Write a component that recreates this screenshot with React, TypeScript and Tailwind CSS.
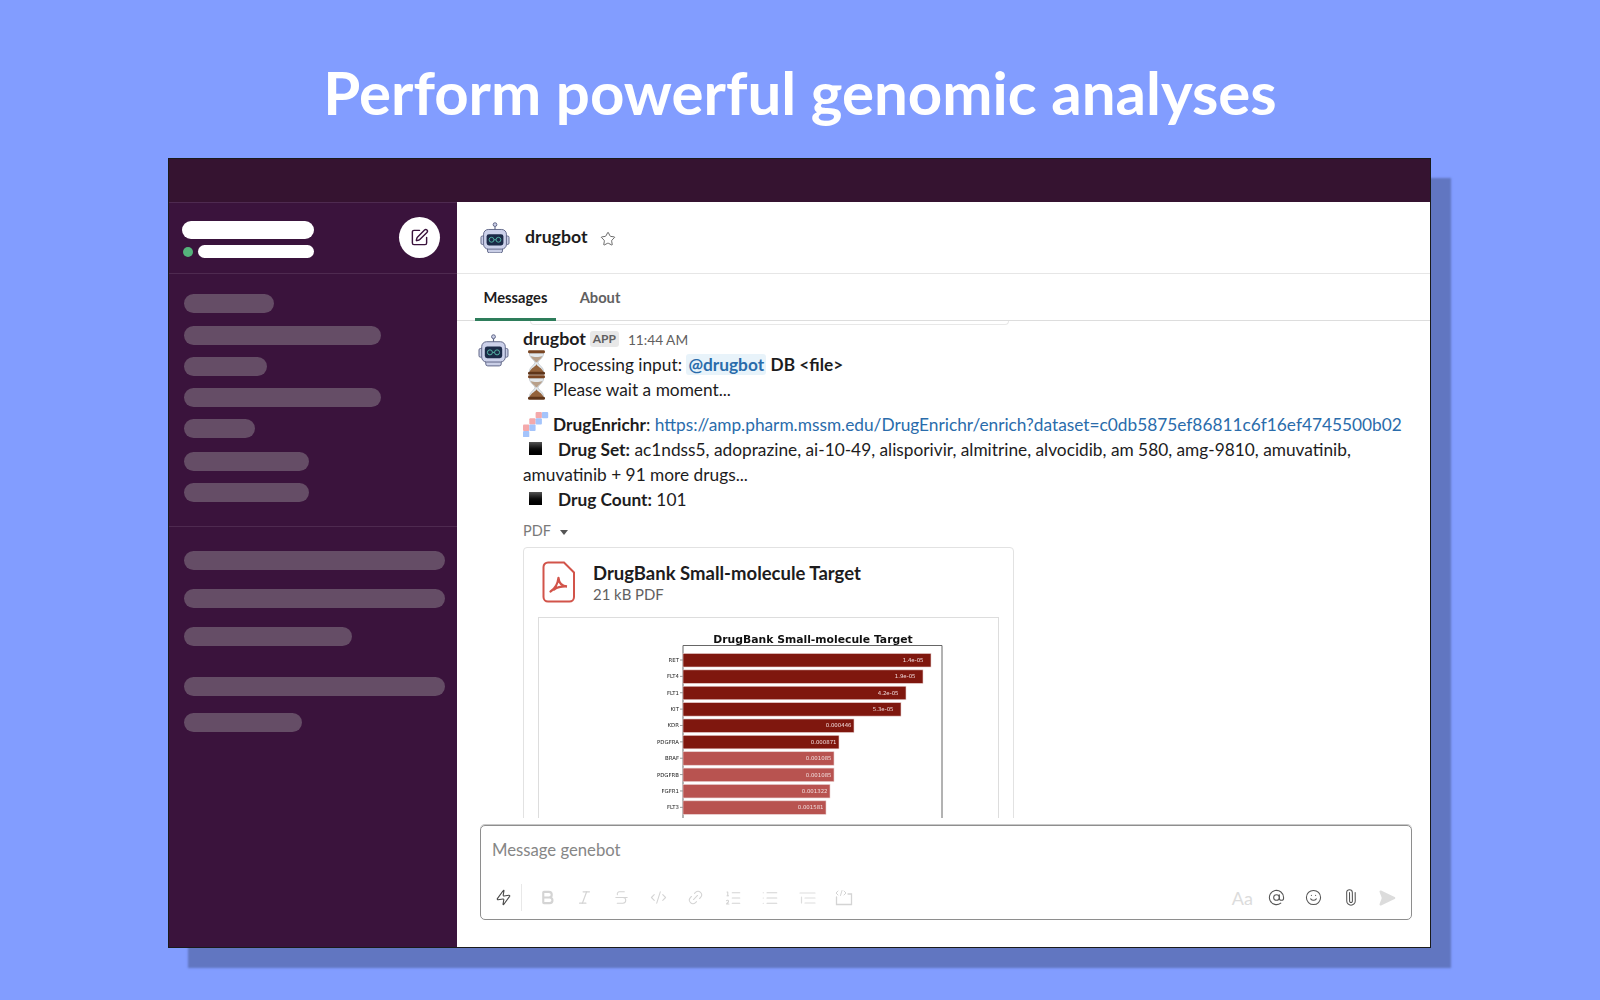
import { AtSign, Bold, CodeXml, Italic, Link2, List, ListOrdered, Paperclip, SendHorizontal, Smile, SquarePen, Star, Strikethrough, Zap } from "lucide-react";

function Robot({ size = 32 }: { size?: number }) {
  return (
    <svg width={size} height={size * 1.06} viewBox="0 0 32 34" className="shrink-0">
      <circle cx="16" cy="2.800" r="2" fill="#c9cee6" stroke="#5d6485" strokeWidth="1" />
      <path d="M16 5v4" stroke="#5d6485" strokeWidth="1.200" />
      <rect x="1" y="15" width="4" height="9" rx="1.500" fill="#c9cee6" stroke="#5d6485" />
      <rect x="27" y="15" width="4" height="9" rx="1.500" fill="#c9cee6" stroke="#5d6485" />
      <rect x="8" y="26" width="16" height="7" rx="2" fill="#c9cee6" stroke="#5d6485" />
      <rect x="3.800" y="8" width="24.400" height="21" rx="5" fill="#ccd1ea" stroke="#5d6485" />
      <rect x="7" y="13" width="18" height="12" rx="2.500" fill="#1b2a47" />
      <circle cx="12.300" cy="19" r="2.600" fill="none" stroke="#57b7a8" strokeWidth="1" />
      <circle cx="19.700" cy="19" r="2.600" fill="none" stroke="#57b7a8" strokeWidth="1" />
      <path d="M15 19h2" stroke="#57b7a8" strokeWidth="1" />
    </svg>
  );
}

function Hourglass() {
  return (
    <svg width="19" height="25" viewBox="0 0 19 25" className="block">
      <path d="M2.500 3C2 7.500 7 9.500 8 12.500 7 15.500 2 17.500 2.500 22h14c.5-4.500-4.500-6.500-5.500-9.500 1-3 6-5 5.500-9.500z" fill="#e3e8ec" stroke="#aab2b8" strokeWidth="0.600" />
      <path d="M3.800 6c3 1.400 8.400 1.400 11.400 0-.6 3-4 4-5 6.300H8.800C7.800 10 4.400 9 3.800 6z" fill="#b8a08a" />
      <path d="M9.500 14c.3 2.500 6 4 6.800 8H2.700c.8-4 6.500-5.500 6.800-8z" fill="#94633c" />
      <rect x="1" y="0.300" width="17" height="3" rx="1.400" fill="#7a4522" />
      <rect x="1" y="21.800" width="17" height="3" rx="1.400" fill="#5f3519" />
    </svg>
  );
}

function EnrichrLogo() {
  const pink = "#f4a9ab";
  const blue = "#a4c4fb";
  const s = 6.300;
  const cells: [number, number, string][] = [
    [2, 0, pink], [3, 0, blue], [1, 1, pink], [2, 1, blue], [0, 2, pink], [1, 2, blue], [0, 3, blue],
  ];
  return (
    <svg width="26" height="25" viewBox="0 0 26 25" className="shrink-0">
      {cells.map(([c, r, f], i) => (
        <rect key={i} x={c * s} y={r * s} width={s} height={s} fill={f} rx="1" />
      ))}
    </svg>
  );
}

function Blk() {
  return <span className="inline-block w-[13px] h-[13px] ml-[6px] mr-[16px] bg-gradient-to-b from-[#555555] via-[#111111] to-[#000000] align-[1px]" />;
}

function PdfIcon() {
  return (
    <svg width="34" height="42" viewBox="0 0 34 42" fill="none" className="shrink-0">
      <path d="M6 1.500h16l10 10V36a4.500 4.500 0 0 1-4.500 4.500H6A4.500 4.500 0 0 1 1.500 36V6A4.500 4.500 0 0 1 6 1.500z" stroke="#d2544a" strokeWidth="2" />
      <path d="M16.500 17c-.6 5-3.500 11-8 13.500M16.500 17c.4 5 3.500 8 8.500 8.500-5-.3-10 1-13 3" stroke="#d2544a" strokeWidth="2.300" strokeLinecap="round" />
    </svg>
  );
}

const bars = [
  ["RET", 931, "1.4e-05", 1], ["FLT4", 923, "1.9e-05", 1], ["FLT1", 906, "4.2e-05", 1], ["KIT", 901, "5.3e-05", 1],
  ["KDR", 854, "0.000446", 1], ["PDGFRA", 839, "0.000871", 1], ["BRAF", 834, "0.001085", 0], ["PDGFRB", 834, "0.001085", 0],
  ["FGFR1", 830, "0.001322", 0], ["FLT3", 826, "0.001581", 0],
] as const;

function Chart() {
  const left = 144;
  return (
    <svg width="459" height="200" viewBox="0 0 459 200" className="block blur-[0.3px]">
      <text x="274" y="25" textAnchor="middle" fontFamily="DejaVu Sans" fontWeight="700" fontSize="10.800" fill="#111">DrugBank Small-molecule Target</text>
      <path d="M144 200V27.500H403V200" stroke="#666" strokeWidth="1" fill="none" />
      {bars.map(([name, end, val, dark], i) => {
        const y = 35.500 + i * 16.37;
        const w = end - 539 - left;
        return (
          <g key={name}>
            <path d={`M141 ${y + 6.500}h3`} stroke="#555" strokeWidth="0.600" />
            <text x="140" y={y + 8.500} textAnchor="end" fontFamily="DejaVu Sans" fontSize="5.400" fill="#222">{name}</text>
            <rect x={left} y={y} width={w} height="13.500" fill={dark ? "#7f170e" : "#b85350"} stroke="#e8cfcf" strokeWidth="0.600" />
            <text x={left + w - (i < 4 ? 7.500 : 2.500)} y={y + 8.500} textAnchor="end" fontFamily="DejaVu Sans" fontSize="5.400" fill="#f0dcdc">{val}</text>
          </g>
        );
      })}
    </svg>
  );
}

function Pill({ w, mt }: { w: string; mt: string }) {
  return <div className={`h-[19px] rounded-full bg-[#654d66] ${w} ${mt}`} />;
}

function CodeBlockIcon() {
  return (
    <svg width="18" height="16" viewBox="0 0 18 16" fill="none" stroke="#d4d4d4" strokeWidth="1.300" strokeLinecap="round">
      <path d="M1.500 7v7.500h15V4H13" />
      <path d="M3 1L1 3l2 2M7 0.500L5.500 5.500M9 1l2 2-2 2" strokeWidth="1" />
    </svg>
  );
}

function IndentIcon() {
  return (
    <svg width="17" height="14" viewBox="0 0 17 14" fill="none" stroke="#dddddd" strokeWidth="1.200" strokeLinecap="round">
      <path d="M1 2h15M6 7h10M6 12h10M2.500 6v6" />
    </svg>
  );
}

export default function App() {
  const tool = "text-[#d4d4d4] shrink-0";
  return (
    <div className="w-[1600px] h-[1000px] bg-[#829dff] overflow-hidden font-['Lato',sans-serif]">
      <h1 className="h-[158px] pt-[55px] text-center text-[60px] leading-[74px] font-bold text-white">Perform powerful genomic analyses</h1>
      <div className="ml-[168px] w-[1263px] h-[790px] flex flex-col border border-[#1a1a1a] shadow-[20px_20px_2px_#6176c1]">
        <div className="h-[43px] shrink-0 bg-[#351330]" />
        <div className="flex-1 flex min-h-0">
          <aside className="w-[288px] shrink-0 bg-[#3a133c] border-t border-[#4e2a50]">
            <div className="h-[71px] flex items-center justify-between pl-[13px] pr-[17px] border-b border-[#4e2a50]">
              <div className="flex flex-col gap-[6px] pt-[3px]">
                <div className="w-[132px] h-[18px] rounded-full bg-white" />
                <div className="flex items-center gap-[5px]">
                  <div className="w-[10px] h-[10px] rounded-full bg-[#55b27b] ml-[1px]" />
                  <div className="w-[116px] h-[13px] rounded-full bg-white" />
                </div>
              </div>
              <div className="w-[41px] h-[41px] rounded-full bg-white flex items-center justify-center mb-[1px]">
                <SquarePen size={19} color="#3a133c" strokeWidth={1.800} />
              </div>
            </div>
            <div className="px-[15px] pt-[20px] pb-[24px] border-b border-[#4e2a50]">
              <Pill w="w-[90px]" mt="" />
              <Pill w="w-[197px]" mt="mt-[13px]" />
              <Pill w="w-[83px]" mt="mt-[12px]" />
              <Pill w="w-[197px]" mt="mt-[12px]" />
              <Pill w="w-[71px]" mt="mt-[12px]" />
              <Pill w="w-[125px]" mt="mt-[14px]" />
              <Pill w="w-[125px]" mt="mt-[12px]" />
            </div>
            <div className="px-[15px] pt-[24px]">
              <Pill w="w-[261px]" mt="" />
              <Pill w="w-[261px]" mt="mt-[19px]" />
              <Pill w="w-[168px]" mt="mt-[19px]" />
              <Pill w="w-[261px]" mt="mt-[31px]" />
              <Pill w="w-[118px]" mt="mt-[17px]" />
            </div>
          </aside>
          <main className="flex-1 min-w-0 bg-white flex flex-col text-[#1d1c1d]">
            <div className="h-[72px] shrink-0 flex items-center pl-[23px] border-b border-[#e6e6e6]">
              <Robot size={30} />
              <span className="ml-[15px] text-[17.700px] font-bold leading-none mb-[1px]">drugbot</span>
              <Star size={16} strokeWidth={1.300} color="#555555" className="ml-[12px] mt-[2px]" />
            </div>
            <div className="h-[47px] shrink-0 flex items-stretch pl-[18px] border-b border-[#dddddd] text-[14.700px] leading-none">
              <div className="w-[81px] flex items-center justify-center font-bold border-b-[3px] border-[#2e7d5b] pt-[3px] h-[47px]">Messages</div>
              <div className="ml-[16px] w-[56px] flex items-center justify-center font-bold text-[#616061] pt-[1px]">About</div>
            </div>
            <div className="flex-1 min-h-0 overflow-hidden relative flex">
              <div className="absolute left-[73px] top-0 w-[479px] h-[4px] border border-t-0 border-[#e8e8e8] rounded-b-[4px]" />
              <div className="pl-[21px] pt-[13px] w-[66px] shrink-0">
                <Robot size={31} />
              </div>
              <div className="pt-[6px] flex-1 min-w-0 pr-[20px] text-[17.300px] leading-[25px]">
                <div className="h-[25px] flex items-center leading-none pb-[2px]">
                  <span className="text-[17.800px] font-bold">drugbot</span>
                  <span className="ml-[4px] h-[16px] w-[29px] rounded-[3px] bg-[#e8e8e8] text-[12px] text-[#616061] flex items-center justify-center font-bold">APP</span>
                  <span className="ml-[9px] text-[13.700px] text-[#616061] mt-[2px]">11:44 AM</span>
                </div>
                <div className="flex">
                  <div className="w-[30px] pl-[4px] shrink-0 -mt-[2px]">
                    <Hourglass />
                    <Hourglass />
                  </div>
                  <div>
                    <div>
                      Processing input: <span className="px-[2px] rounded-[3px] bg-[#e8f3fa] text-[#2a6cab] font-bold">@drugbot</span> <span className="font-bold">DB &lt;file&gt;</span>
                    </div>
                    <div>Please wait a moment...</div>
                  </div>
                </div>
                <div className="flex mt-[10px] items-center">
                  <div className="w-[30px] shrink-0 -mt-[1px]"><EnrichrLogo /></div>
                  <div className="whitespace-nowrap"><span className="font-bold">DrugEnrichr</span>: <span className="text-[#2a6cab]">https://amp.pharm.mssm.edu/DrugEnrichr/enrich?dataset=c0db5875ef86811c6f16ef4745500b02</span></div>
                </div>
                <div><Blk /><span className="font-bold">Drug Set:</span> ac1ndss5, adoprazine, ai-10-49, alisporivir, almitrine, alvocidib, am 580, amg-9810, amuvatinib, amuvatinib + 91 more drugs...</div>
                <div><Blk /><span className="font-bold">Drug Count:</span> 101</div>
                <div className="mt-[9px] h-[20px] flex items-center text-[14.500px] leading-none text-[#7a7a7a]">
                  PDF
                  <span className="ml-[9px] mt-[2px] w-0 h-0 border-x-[4.500px] border-x-transparent border-t-[5px] border-t-[#555555]" />
                </div>
                <div className="mt-[6px] w-[491px] h-[400px] rounded-[4px] border border-[#e2e2e2] px-[14px]">
                  <div className="h-[69px] flex items-center pl-[4px] pb-[2px]">
                    <PdfIcon />
                    <div className="ml-[17px]">
                      <div className="text-[18.500px] leading-[24px] font-bold">DrugBank Small-molecule Target</div>
                      <div className="text-[14.900px] leading-[18px] text-[#616061]">21 kB PDF</div>
                    </div>
                  </div>
                  <div className="h-[300px] border border-[#dddddd]">
                    <Chart />
                  </div>
                </div>
              </div>
            </div>
            <div className="h-[129px] shrink-0 pl-[23px] pr-[18px] pt-[7px] bg-white relative">
              <div className="h-[95px] rounded-[5px] border border-[#8e8e8e] flex flex-col shadow-[0_-1px_0_#c8c8c8]">
                <div className="h-[47px] pl-[11px] pt-[3px] flex items-center text-[16.700px] text-[#868686]">Message genebot</div>
                <div className="flex-1 flex items-center pl-[14px] pr-[15px] pt-[3px]">
                  <Zap size={17} strokeWidth={1.600} color="#4a4a4a" className="shrink-0 -rotate-[8deg]" />
                  <div className="ml-[9px] w-px h-[27px] bg-[#e8e8e8] shrink-0" />
                  <Bold size={17} strokeWidth={3} className={`${tool} ml-[17px]`} />
                  <Italic size={17} strokeWidth={1.700} className={`${tool} ml-[20px]`} />
                  <Strikethrough size={17} strokeWidth={1.500} className={`${tool} ml-[20px]`} />
                  <CodeXml size={17} strokeWidth={1.500} className={`${tool} ml-[20px]`} />
                  <Link2 size={17} strokeWidth={1.500} className={`${tool} ml-[20px] -rotate-45`} />
                  <ListOrdered size={18} strokeWidth={1.500} className={`${tool} ml-[20px]`} />
                  <List size={18} strokeWidth={1.500} className={`${tool} ml-[19px]`} />
                  <span className="ml-[20px] shrink-0 flex"><IndentIcon /></span>
                  <span className="ml-[19px] shrink-0 flex"><CodeBlockIcon /></span>
                  <span className="ml-auto text-[18px] leading-none text-[#dcdcdc]">Aa</span>
                  <AtSign size={17} strokeWidth={1.500} color="#555555" className="ml-[15px] shrink-0" />
                  <Smile size={17} strokeWidth={1.500} color="#555555" className="ml-[20px] shrink-0" />
                  <Paperclip size={17} strokeWidth={1.500} color="#555555" className="ml-[20px] shrink-0 -rotate-45" />
                  <SendHorizontal size={18} strokeWidth={2} color="#dcdcdc" fill="#dcdcdc" className="ml-[19px] shrink-0" />
                </div>
              </div>
            </div>
          </main>
        </div>
      </div>
    </div>
  );
}
